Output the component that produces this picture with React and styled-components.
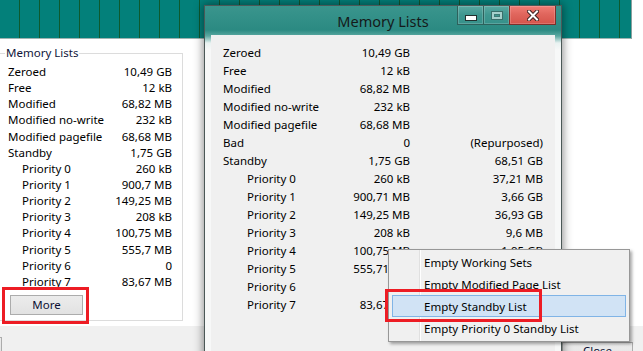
import React from "react";
import styled, { createGlobalStyle } from "styled-components";

const Global = createGlobalStyle`
  html, body { margin: 0; padding: 0; background: #fff; overflow: hidden; }
  body { font-family: "Noto Sans", "Open Sans", sans-serif; font-size: 11.5px; color: #000; }
  * { box-sizing: border-box; }
`;

const Desktop = styled.div`
  position: relative;
  width: 643px;
  height: 351px;
  overflow: hidden;
  background: #fff;
`;

const BackApp = styled.div`
  display: flex;
  flex-direction: column;
  height: 351px;
`;

const TealBand = styled.div`
  flex: none;
  width: 632px;
  height: 39px;
  border-right: 1px solid #8a9f9d;
  border-bottom: 1px solid #9fb3b1;
  background: repeating-linear-gradient(90deg, #03807a 0 19px, #0d5a2e 19px 20px);
`;

const Main = styled.div`
  flex: 1;
  display: flex;
  background: #fff;
`;

const LeftPanel = styled.div`
  width: 205px;
  padding-top: 6px;
  background: #fff;
`;

const GroupBox = styled.fieldset`
  margin: 0 0 0 -2px;
  width: 185px;
  padding: 3px 10px 5px 9px;
  border: 1px solid #dcdcdc;
  min-width: 0;
`;

const Legend = styled.legend`
  margin-left: -3px;
  padding: 0 1px;
  line-height: 16px;
  color: #10163a;
`;

const LeftGrid = styled.div`
  display: grid;
  grid-template-columns: 1fr auto;
  grid-auto-rows: 16.15px;
  line-height: 16.15px;
`;

const Label = styled.div`
  padding-left: ${(p) => (p.$indent ? p.$indent : 0)}px;
  white-space: nowrap;
`;

const Value = styled.div`
  text-align: right;
  white-space: nowrap;
`;

const ButtonSlot = styled.div`
  position: relative;
  margin: 5px 0 0 2px;
  width: 73px;
`;

const WinButton = styled.div`
  display: flex;
  align-items: center;
  justify-content: center;
  width: ${(p) => p.$w || 73}px;
  height: ${(p) => p.$h || 20}px;
  border: 1px solid #acacac;
  background: linear-gradient(#ececec, #e2e2e2);
  color: #0c1033;
  line-height: 1;
`;

const RedBox = styled.div`
  position: absolute;
  left: ${(p) => p.$l}px;
  top: ${(p) => p.$t}px;
  width: ${(p) => p.$w}px;
  height: ${(p) => p.$h}px;
  border: 3px solid #ed1c24;
  pointer-events: none;
`;

const Footer = styled.div`
  flex: none;
  height: 25px;
  background: #f0f0f0;
  display: flex;
  justify-content: space-between;
  align-items: flex-start;
`;

const FooterLeftButton = styled(WinButton)`
  margin: 11px 0 0 -70px;
`;

const FooterRightButton = styled(WinButton)`
  margin: 16px 10px 0 0;
  align-items: flex-start;
  padding-top: 2px;
`;

/* ---------- floating window ---------- */

const Window = styled.div`
  position: absolute;
  left: 204px;
  top: 5px;
  width: 358px;
  height: 380px;
  border: 1px solid #4b5857;
  background: linear-gradient(
    to bottom,
    #3a958d 0px,
    #2b8a82 24px,
    #5aa8a1 30px,
    #e9f2f1 37px,
    #f7f8f8 44px,
    #f7f8f8 100%
  );
  box-shadow: 0 0 9px 1px rgba(0, 0, 0, 0.45);
  display: flex;
  flex-direction: column;
`;

const TitleBar = styled.div`
  flex: none;
  height: 29px;
  display: grid;
  grid-template-columns: 1fr auto 1fr;
  align-items: start;
`;

const Title = styled.div`
  grid-column: 2;
  font-size: 14.5px;
  line-height: 15px;
  padding-top: 8px;
  color: #151a1a;
  white-space: nowrap;
`;

const Caption = styled.div`
  grid-column: 3;
  justify-self: end;
  display: flex;
  margin-right: 5px;
`;

const CapBtn = styled.div`
  width: ${(p) => p.$w}px;
  height: 19px;
  display: flex;
  justify-content: center;
  align-items: ${(p) => (p.$low ? "flex-end" : "center")};
  padding-bottom: ${(p) => (p.$low ? 3 : 0)}px;
  border: 1px solid ${(p) => (p.$close ? "#7b2f2a" : "#2d615c")};
  border-top: none;
  margin-left: -1px;
  background: ${(p) =>
    p.$close
      ? "linear-gradient(#f07e75, #e0665d 45%, #d5544b)"
      : "linear-gradient(#5aa9a2, #3e968f 50%, #36918a)"};
  box-shadow: inset 0 0 0 1px rgba(255, 255, 255, 0.18);
`;

const Client = styled.div`
  flex: 1;
  margin: 0 6px;
  background: #f0f0f0;
  padding: 9px 12px 0 12px;
`;

const WinGrid = styled.div`
  display: grid;
  grid-template-columns: 107px 80px 1fr;
  grid-auto-rows: 18px;
  line-height: 18px;
`;

/* ---------- context menu ---------- */

const Menu = styled.div`
  position: absolute;
  left: 388px;
  top: 249px;
  width: 242px;
  height: 93px;
  border: 1px solid #979797;
  padding: 1px 3px;
  background: linear-gradient(
    to right,
    #f0f0f0 0 30px,
    #e0e0e0 30px 31px,
    #ffffff 31px 32px,
    #f0f0f0 32px
  );
  box-shadow: 2px 2px 3px rgba(0, 0, 0, 0.35);
`;

const MenuItem = styled.div`
  position: relative;
  height: 22px;
  line-height: 21px;
  padding-left: 31px;
  border: 1px solid ${(p) => (p.$active ? "#80b4e6" : "transparent")};
  background: ${(p) => (p.$active ? "#d1e3f5" : "transparent")};
  white-space: nowrap;
`;

const leftRows = [
  ["Zeroed", "10,49 GB", 0],
  ["Free", "12 kB", 0],
  ["Modified", "68,82 MB", 0],
  ["Modified no-write", "232 kB", 0],
  ["Modified pagefile", "68,68 MB", 0],
  ["Standby", "1,75 GB", 0],
  ["Priority 0", "260 kB", 14],
  ["Priority 1", "900,7 MB", 14],
  ["Priority 2", "149,25 MB", 14],
  ["Priority 3", "208 kB", 14],
  ["Priority 4", "100,75 MB", 14],
  ["Priority 5", "555,7 MB", 14],
  ["Priority 6", "0", 14],
  ["Priority 7", "83,67 MB", 14],
];

const winRows = [
  ["Zeroed", "10,49 GB", "", 0],
  ["Free", "12 kB", "", 0],
  ["Modified", "68,82 MB", "", 0],
  ["Modified no-write", "232 kB", "", 0],
  ["Modified pagefile", "68,68 MB", "", 0],
  ["Bad", "0", "(Repurposed)", 0],
  ["Standby", "1,75 GB", "68,51 GB", 0],
  ["Priority 0", "260 kB", "37,21 MB", 24],
  ["Priority 1", "900,71 MB", "3,66 GB", 24],
  ["Priority 2", "149,25 MB", "36,93 GB", 24],
  ["Priority 3", "208 kB", "9,6 MB", 24],
  ["Priority 4", "100,75 MB", "1,95 GB", 24],
  ["Priority 5", "555,71 MB", "", 24],
  ["Priority 6", "0", "", 24],
  ["Priority 7", "83,67 MB", "", 24],
];

const menuItems = [
  "Empty Working Sets",
  "Empty Modified Page List",
  "Empty Standby List",
  "Empty Priority 0 Standby List",
];

const MinGlyph = () => (
  <svg width="12" height="6" viewBox="0 0 12 6">
    <rect x="0.5" y="0.5" width="11" height="5" fill="#fff" stroke="#23302f" />
  </svg>
);

const MaxGlyph = () => (
  <svg width="12" height="9" viewBox="0 0 12 9">
    <rect x="0.5" y="0.5" width="11" height="8" fill="none" stroke="#3a6f6a" />
    <rect x="2" y="2" width="8" height="5" fill="none" stroke="#a6d0cc" strokeWidth="2" />
    <rect x="3.5" y="3.5" width="5" height="2" fill="none" stroke="#3f7a75" strokeWidth="1" />
  </svg>
);

const CloseGlyph = () => (
  <svg width="12" height="11" viewBox="0 0 12 11">
    <path d="M2 1.5 L10 9.5 M10 1.5 L2 9.5" stroke="#3b2222" strokeWidth="4" strokeLinecap="square" />
    <path d="M2 1.5 L10 9.5 M10 1.5 L2 9.5" stroke="#fff" strokeWidth="2" strokeLinecap="square" />
  </svg>
);

export default function App() {
  return (
    <>
      <Global />
      <Desktop>
        <BackApp>
          <TealBand />
          <Main>
            <LeftPanel>
              <GroupBox>
                <Legend>Memory Lists</Legend>
                <LeftGrid>
                  {leftRows.map(([l, v, ind]) => (
                    <React.Fragment key={l}>
                      <Label $indent={ind}>{l}</Label>
                      <Value>{v}</Value>
                    </React.Fragment>
                  ))}
                </LeftGrid>
                <ButtonSlot>
                  <WinButton>More</WinButton>
                  <RedBox $l={-8} $t={-8} $w={87} $h={37} />
                </ButtonSlot>
              </GroupBox>
            </LeftPanel>
          </Main>
          <Footer>
            <FooterLeftButton $w={72} $h={22} />
            <FooterRightButton $w={71} $h={22}>Close</FooterRightButton>
          </Footer>
        </BackApp>

        <Window>
          <TitleBar>
            <Title>Memory Lists</Title>
            <Caption>
              <CapBtn $w={27} $low>
                <MinGlyph />
              </CapBtn>
              <CapBtn $w={27}>
                <MaxGlyph />
              </CapBtn>
              <CapBtn $w={47} $close>
                <CloseGlyph />
              </CapBtn>
            </Caption>
          </TitleBar>
          <Client>
            <WinGrid>
              {winRows.map(([l, v, r, ind]) => (
                <React.Fragment key={l}>
                  <Label $indent={ind}>{l}</Label>
                  <Value>{v}</Value>
                  <Value>{r}</Value>
                </React.Fragment>
              ))}
            </WinGrid>
          </Client>
        </Window>

        <Menu>
          {menuItems.map((m, i) => (
            <MenuItem key={m} $active={i === 2}>
              {m}
              {i === 2 && <RedBox $l={-8} $t={-7} $w={157} $h={33} />}
            </MenuItem>
          ))}
        </Menu>
      </Desktop>
    </>
  );
}
